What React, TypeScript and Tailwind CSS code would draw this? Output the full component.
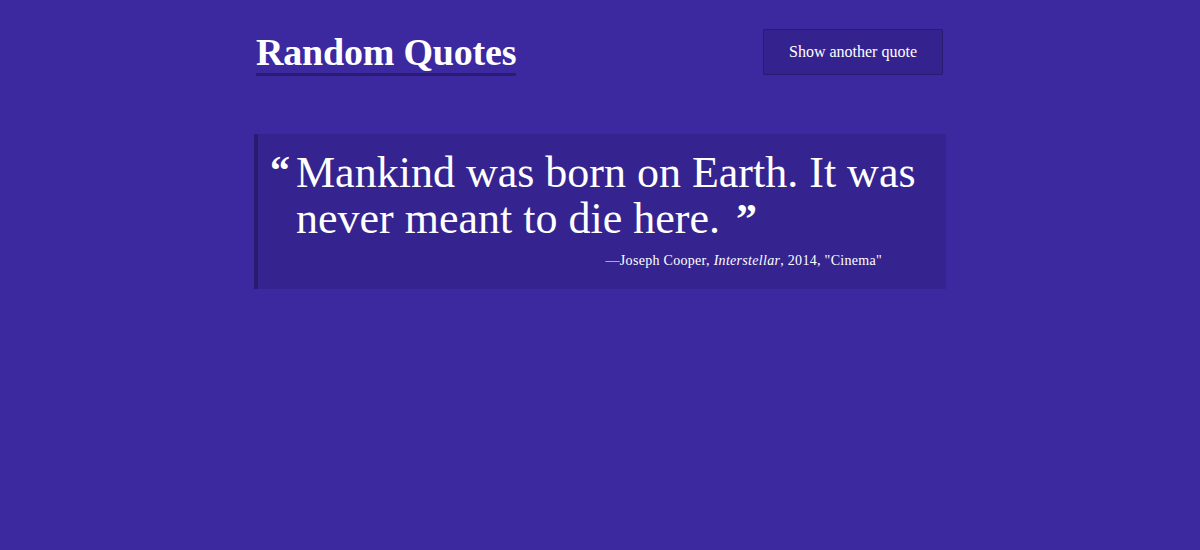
export default function App() {
  return (
    <div className="min-h-[550px] w-full bg-[#3c29a0] text-white" style={{ fontFamily: '"Liberation Serif", "DejaVu Serif", serif' }}>
      <div className="mx-auto w-[692px]">
        {/* header */}
        <header className="flex items-start justify-between px-[2px] pt-[29px]">
          <h1 className="mt-[3px] inline-block border-b-[3px] border-[#2b1c72] text-[38px] font-bold leading-[41px] tracking-[-0.2px]">
            Random Quotes
          </h1>
          <button className="mr-[1px] h-[46px] w-[180px] rounded-[2px] border border-[#2a1b70] bg-[#34238f] text-[16px] text-white">
            Show another quote
          </button>
        </header>

        {/* quote */}
        <blockquote className="mt-[58px] border-l-4 border-[#2a1b70] bg-[#35248f] pb-[19px] pl-[12px] pr-[24px] pt-[16px]">
          <div className="flex">
            <span className="mr-[6px] mt-[6px] text-[40px] font-bold leading-[30px]">“</span>
            <p className="text-[44px] leading-[46px]">
              Mankind was born on Earth. It was
              <br />
              never meant to die here.
              <span className="ml-[16px] inline-block align-top text-[42px] font-bold leading-[46px]">”</span>
            </p>
          </div>
          <p className="mt-[10px] pr-[40px] text-right text-[14px] leading-[18px] tracking-[0.3px]">
            —Joseph Cooper, <em>Interstellar</em>, 2014, "Cinema"
          </p>
        </blockquote>
      </div>
    </div>
  );
}
